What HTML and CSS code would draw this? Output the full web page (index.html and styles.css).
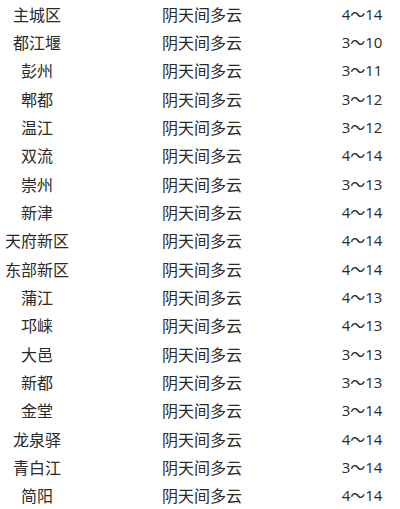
FILE: index.html
```html
<!DOCTYPE html>
<html lang="zh">
<head>
<meta charset="utf-8">
<link rel="stylesheet" href="styles.css">
</head>
<body>
<div class="table">
  <div class="row"><span class="area">主城区</span><span class="weather">阴天间多云</span><span class="temp">4～14</span></div>
  <div class="row"><span class="area">都江堰</span><span class="weather">阴天间多云</span><span class="temp">3～10</span></div>
  <div class="row"><span class="area">彭州</span><span class="weather">阴天间多云</span><span class="temp">3～11</span></div>
  <div class="row"><span class="area">郫都</span><span class="weather">阴天间多云</span><span class="temp">3～12</span></div>
  <div class="row"><span class="area">温江</span><span class="weather">阴天间多云</span><span class="temp">3～12</span></div>
  <div class="row"><span class="area">双流</span><span class="weather">阴天间多云</span><span class="temp">4～14</span></div>
  <div class="row"><span class="area">崇州</span><span class="weather">阴天间多云</span><span class="temp">3～13</span></div>
  <div class="row"><span class="area">新津</span><span class="weather">阴天间多云</span><span class="temp">4～14</span></div>
  <div class="row"><span class="area">天府新区</span><span class="weather">阴天间多云</span><span class="temp">4～14</span></div>
  <div class="row"><span class="area">东部新区</span><span class="weather">阴天间多云</span><span class="temp">4～14</span></div>
  <div class="row"><span class="area">蒲江</span><span class="weather">阴天间多云</span><span class="temp">4～13</span></div>
  <div class="row"><span class="area">邛崃</span><span class="weather">阴天间多云</span><span class="temp">4～13</span></div>
  <div class="row"><span class="area">大邑</span><span class="weather">阴天间多云</span><span class="temp">3～13</span></div>
  <div class="row"><span class="area">新都</span><span class="weather">阴天间多云</span><span class="temp">3～13</span></div>
  <div class="row"><span class="area">金堂</span><span class="weather">阴天间多云</span><span class="temp">3～14</span></div>
  <div class="row"><span class="area">龙泉驿</span><span class="weather">阴天间多云</span><span class="temp">4～14</span></div>
  <div class="row"><span class="area">青白江</span><span class="weather">阴天间多云</span><span class="temp">3～14</span></div>
  <div class="row"><span class="area">简阳</span><span class="weather">阴天间多云</span><span class="temp">4～14</span></div>
</div>
</body>
</html>
```
FILE: styles.css
```css
html, body {
  margin: 0;
  padding: 0;
  background: #ffffff;
}
body {
  width: 400px;
  height: 509px;
  overflow: hidden;
  font-family: "Noto Sans CJK SC", sans-serif;
  font-size: 16px;
  color: #2a2a2a;
}
.table {
  display: flex;
  flex-direction: column;
}
.row {
  display: grid;
  grid-template-columns: 74px 250px 76px;
  height: 28.33px;
  align-items: center;
  line-height: 1;
}
.area {
  text-align: center;
  padding-bottom: 1px;
}
.weather {
  padding-left: 88px;
  padding-bottom: 1px;
}
.temp {
  text-align: center;
  font-family: "Open Sans", "Noto Sans CJK SC", sans-serif;
  font-size: 15px;
}
```
